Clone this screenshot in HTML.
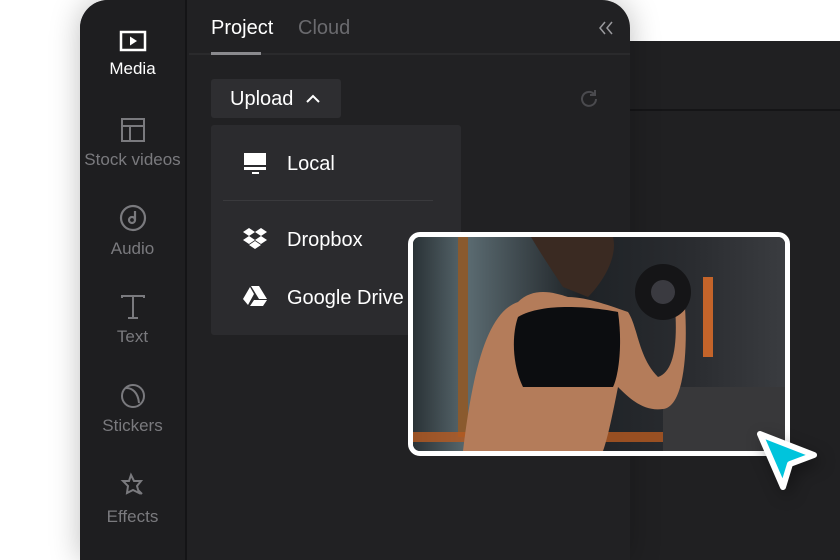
<!DOCTYPE html>
<html><head><meta charset="utf-8"><style>
*{margin:0;padding:0;box-sizing:border-box}
body{width:840px;height:560px;background:#fff;position:relative;overflow:hidden;font-family:"Liberation Sans",sans-serif}
.bgp{position:absolute;left:600px;top:41px;width:240px;height:519px;background:#202022}
.bgp .l{position:absolute;left:0;right:0;top:68px;height:2px;background:#151517}
.main{position:absolute;left:80px;top:0;width:550px;height:560px;background:#212123;border-radius:28px 28px 0 0;box-shadow:0 0 30px rgba(0,0,0,.25);overflow:hidden}
.side{position:absolute;left:0;top:0;width:107px;height:560px;background:#1e1e20;border-right:2px solid #141416}
.it{position:absolute;left:0;width:105px;text-align:center;color:#7a7a7e;font-size:17px}
.it svg{display:block;margin:0 auto 7px}
.hdr{position:absolute;left:109px;top:0;right:0;height:55px;border-bottom:2px solid #2a2a2c}
.tab{position:absolute;top:17px;font-size:20px}
.up{position:absolute;left:131px;top:79px;width:130px;height:39px;background:#2e2e31;border-radius:3px;color:#fff;font-size:20px;padding:9px 0 0 19px}
.dd{position:absolute;left:131px;top:125px;width:250px;height:210px;background:#2b2b2e;border-radius:3px}
.dd .t{position:absolute;left:76px;color:#fff;font-size:20px}
.card{position:absolute;left:408px;top:232px;width:382px;height:224px;border:5px solid #fff;border-radius:12px;overflow:hidden;background:#2a2a2c}
</style></head><body>
<div class="bgp"><div class="l"></div></div>
<div class="main">
 <div class="side">
  <div class="it" style="top:30px;color:#fff"><svg width="28" height="22" viewBox="0 0 28 22"><rect x="2" y="2" width="24" height="18" fill="none" stroke="#fff" stroke-width="2.5"/><path d="M11 6.5l7 4.5-7 4.5z" fill="#fff"/></svg>Media</div>
  <div class="it" style="top:117px"><svg width="26" height="26" viewBox="0 0 26 26" fill="none" stroke="#7a7a7e" stroke-width="2"><rect x="2" y="2" width="22" height="22"/><path d="M2 9h22M10 9v15"/></svg>Stock videos</div>
  <div class="it" style="top:204px"><svg width="28" height="28" viewBox="0 0 28 28" fill="none" stroke="#7a7a7e" stroke-width="2.2"><circle cx="14" cy="14" r="12"/><circle cx="13" cy="16" r="3"/><path d="M16 16V7"/></svg>Audio</div>
  <div class="it" style="top:294px"><svg width="26" height="26" viewBox="0 0 26 26" fill="none" stroke="#7a7a7e" stroke-width="2"><path d="M2 4V2h22v2M13 2v22M8 24h10"/></svg>Text</div>
  <div class="it" style="top:383px"><svg width="26" height="26" viewBox="0 0 26 26" fill="none" stroke="#7a7a7e" stroke-width="2"><circle cx="13" cy="13" r="11"/><path d="M6 5c6 0 12 4 13 15"/></svg>Stickers</div>
  <div class="it" style="top:472px"><svg width="28" height="28" viewBox="0 0 28 28" fill="none" stroke="#7a7a7e" stroke-width="2"><path d="M12 3l3 6 7 0-4 5 2 7-6-3-6 3 1-7-5-5 6 0zM19 18l4 4"/></svg>Effects</div>
 </div>
 <div class="hdr">
  <div class="tab" style="left:22px;color:#fff">Project</div>
  <div class="tab" style="left:109px;color:#6a6a6e">Cloud</div>
  <div style="position:absolute;left:22px;top:52px;width:50px;height:3px;background:#8a8a8e"></div>
  <svg style="position:absolute;left:408px;top:20px" width="18" height="16" viewBox="0 0 18 16" fill="none" stroke="#9a9a9e" stroke-width="1.5"><path d="M8 2L3 8l5 6M15 2l-5 6 5 6"/></svg>
 </div>
 <div class="up">Upload <svg width="16" height="12" viewBox="0 0 16 12" style="margin-left:6px" fill="none" stroke="#fff" stroke-width="2"><path d="M2 9l6-6 6 6"/></svg></div>
 <svg style="position:absolute;left:498px;top:88px" width="22" height="22" viewBox="0 0 22 22" fill="none" stroke="#4a4a4e" stroke-width="2"><path d="M18 11a7 7 0 1 1-2-5M17 2v5h-5"/></svg>
 <div class="dd">
  <svg style="position:absolute;left:32px;top:28px" width="24" height="22" viewBox="0 0 24 22" fill="#fff"><rect x="1" y="0" width="22" height="12"/><rect x="1" y="14" width="22" height="3"/><rect x="9" y="19" width="7" height="2"/></svg>
  <div class="t" style="top:28px">Local</div>
  <div style="position:absolute;left:12px;top:75px;width:210px;height:1px;background:#3a3a3d"></div>
  <svg style="position:absolute;left:32px;top:103px" width="24" height="22" viewBox="0 0 24 22" fill="#fff"><path d="M6 0l6 4-6 4-6-4zM18 0l6 4-6 4-6-4zM0 12l6-4 6 4-6 4zM24 12l-6-4-6 4 6 4zM6 17l6-4 6 4-6 4z"/></svg>
  <div class="t" style="top:104px">Dropbox</div>
  <svg style="position:absolute;left:32px;top:161px" width="24" height="20" viewBox="0 0 24 20" fill="#fff"><path d="M8 0h8l8 13h-8zM7 1l4 7-6 11-5-6zM7 20l4-6h13l-4 6z"/></svg>
  <div class="t" style="top:162px">Google Drive</div>
 </div>
</div>
<div class="card">
 <svg width="372" height="214" viewBox="0 0 372 214">
  <defs><linearGradient id="g" x1="0" x2="1"><stop offset="0" stop-color="#2a3236"/><stop offset=".15" stop-color="#5a6a70"/><stop offset=".45" stop-color="#1e2226"/><stop offset=".75" stop-color="#2a2c30"/><stop offset="1" stop-color="#3a3c40"/></linearGradient></defs>
  <rect width="372" height="214" fill="url(#g)"/>
  <rect x="45" y="0" width="10" height="200" fill="#8a5a2e"/>
  <rect x="0" y="195" width="372" height="10" fill="#b65a20" opacity=".8"/>
  <rect x="290" y="40" width="10" height="80" fill="#c4642a"/>
  <rect x="250" y="150" width="122" height="64" fill="#38383a"/>
  <path d="M50 214 C60 130 75 75 105 65 C120 50 140 55 155 60 C175 60 200 70 215 75 C225 90 225 120 245 140 C260 135 265 110 262 70 L272 70 C275 120 270 170 250 172 C230 175 215 160 205 150 C200 175 195 200 190 214 Z" fill="#b47c5a"/>
  <path d="M105 80 C130 65 180 70 205 75 C210 110 205 140 200 150 L110 150 C100 130 98 100 105 80Z" fill="#0c0d10"/>
  <path d="M118 0 L200 0 C205 20 190 45 175 60 L150 50 C140 35 130 20 118 0Z" fill="#3a2a22"/>
  <circle cx="250" cy="55" r="28" fill="#151517"/><circle cx="250" cy="55" r="12" fill="#3a3a40"/>
 </svg>
</div>
<svg style="position:absolute;left:750px;top:425px;filter:drop-shadow(4px 6px 8px rgba(0,0,0,.35))" width="72" height="72" viewBox="0 0 72 72"><path d="M10 9 L64 30 L40 39 L33 62 Z" fill="#00c4dc" stroke="#fff" stroke-width="6" stroke-linejoin="round"/></svg>
</body></html>
